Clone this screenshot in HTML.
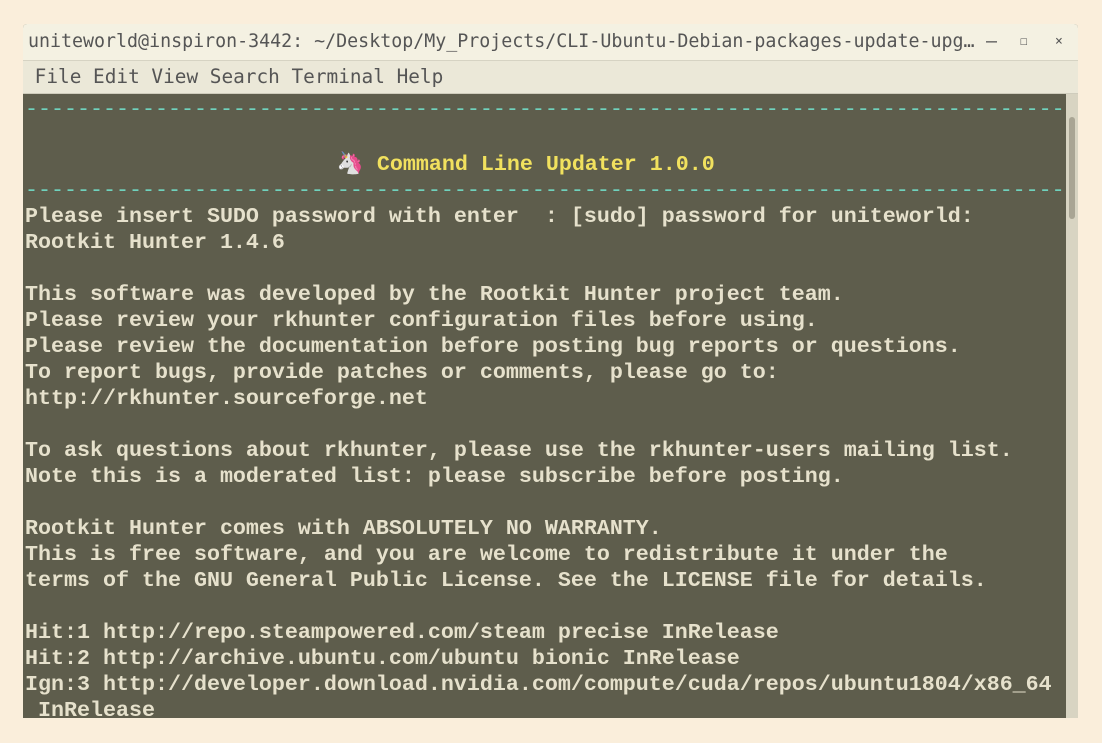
<!DOCTYPE html>
<html><head><style>
body{margin:0;width:1102px;height:743px;background:#faeedb;position:relative;overflow:hidden;font-family:"Liberation Sans",sans-serif}
.win{position:absolute;left:23px;top:24px;width:1055px;height:694px;background:#5e5d4c;border-radius:4px 4px 0 0;overflow:hidden}
.title{position:absolute;left:0;top:0;width:1055px;height:36px;background:#f4f1e2;border-bottom:1px solid #d6d3c3;font-family:monospace;font-size:18.3px;color:#555;line-height:36px}
.title span.t{position:absolute;left:5px;top:0}
.menu{position:absolute;left:0;top:37px;width:1055px;height:32px;background:#ebe8d8;border-bottom:1px solid #cfccbc;font-family:monospace;font-size:19.4px;color:#555;line-height:32px;white-space:pre}
.term{position:absolute;left:0;top:70px;width:1043px;height:624px;background:#5e5d4c;overflow:hidden}
.sb{position:absolute;left:1043px;top:70px;width:12px;height:624px;background:#d8d4c2}
.sb div{position:absolute;left:3px;top:23px;width:6px;height:102px;background:#a9a594;border-radius:3px}
pre{margin:0;position:absolute;left:2px;top:3px;font-family:"Liberation Mono","Cousine","Courier New",FreeMono,monospace;font-weight:bold;font-size:21.67px;line-height:26px;color:#e6e1cc}
.d{color:#6fd2bd;font-weight:normal}
.y{color:#f1e15e}
</style></head><body>
<div class="win">
<div class="title"><span class="t">uniteworld@inspiron-3442: ~/Desktop/My_Projects/CLI-Ubuntu-Debian-packages-update-upg…</span><span style="position:absolute;left:963px">–</span><span style="position:absolute;left:997px;font-size:13px">☐</span><span style="position:absolute;left:1032px;font-size:13px">×</span></div>
<div class="menu"> File Edit View Search Terminal Help</div>
<div class="term"><pre><span class="d">--------------------------------------------------------------------------------</span>

                        <span style="font-family:'Noto Sans CJK JP',sans-serif;font-weight:normal">🦄</span> <span class="y">Command Line Updater 1.0.0</span>
<span class="d">--------------------------------------------------------------------------------</span>
Please insert SUDO password with enter  : [sudo] password for uniteworld:
Rootkit Hunter 1.4.6

This software was developed by the Rootkit Hunter project team.
Please review your rkhunter configuration files before using.
Please review the documentation before posting bug reports or questions.
To report bugs, provide patches or comments, please go to:
http://rkhunter.sourceforge.net

To ask questions about rkhunter, please use the rkhunter-users mailing list.
Note this is a moderated list: please subscribe before posting.

Rootkit Hunter comes with ABSOLUTELY NO WARRANTY.
This is free software, and you are welcome to redistribute it under the
terms of the GNU General Public License. See the LICENSE file for details.

Hit:1 http://repo.steampowered.com/steam precise InRelease
Hit:2 http://archive.ubuntu.com/ubuntu bionic InRelease
Ign:3 http://developer.download.nvidia.com/compute/cuda/repos/ubuntu1804/x86_64
 InRelease</pre></div>
<div class="sb"><div></div></div>
</div>
</body></html>
